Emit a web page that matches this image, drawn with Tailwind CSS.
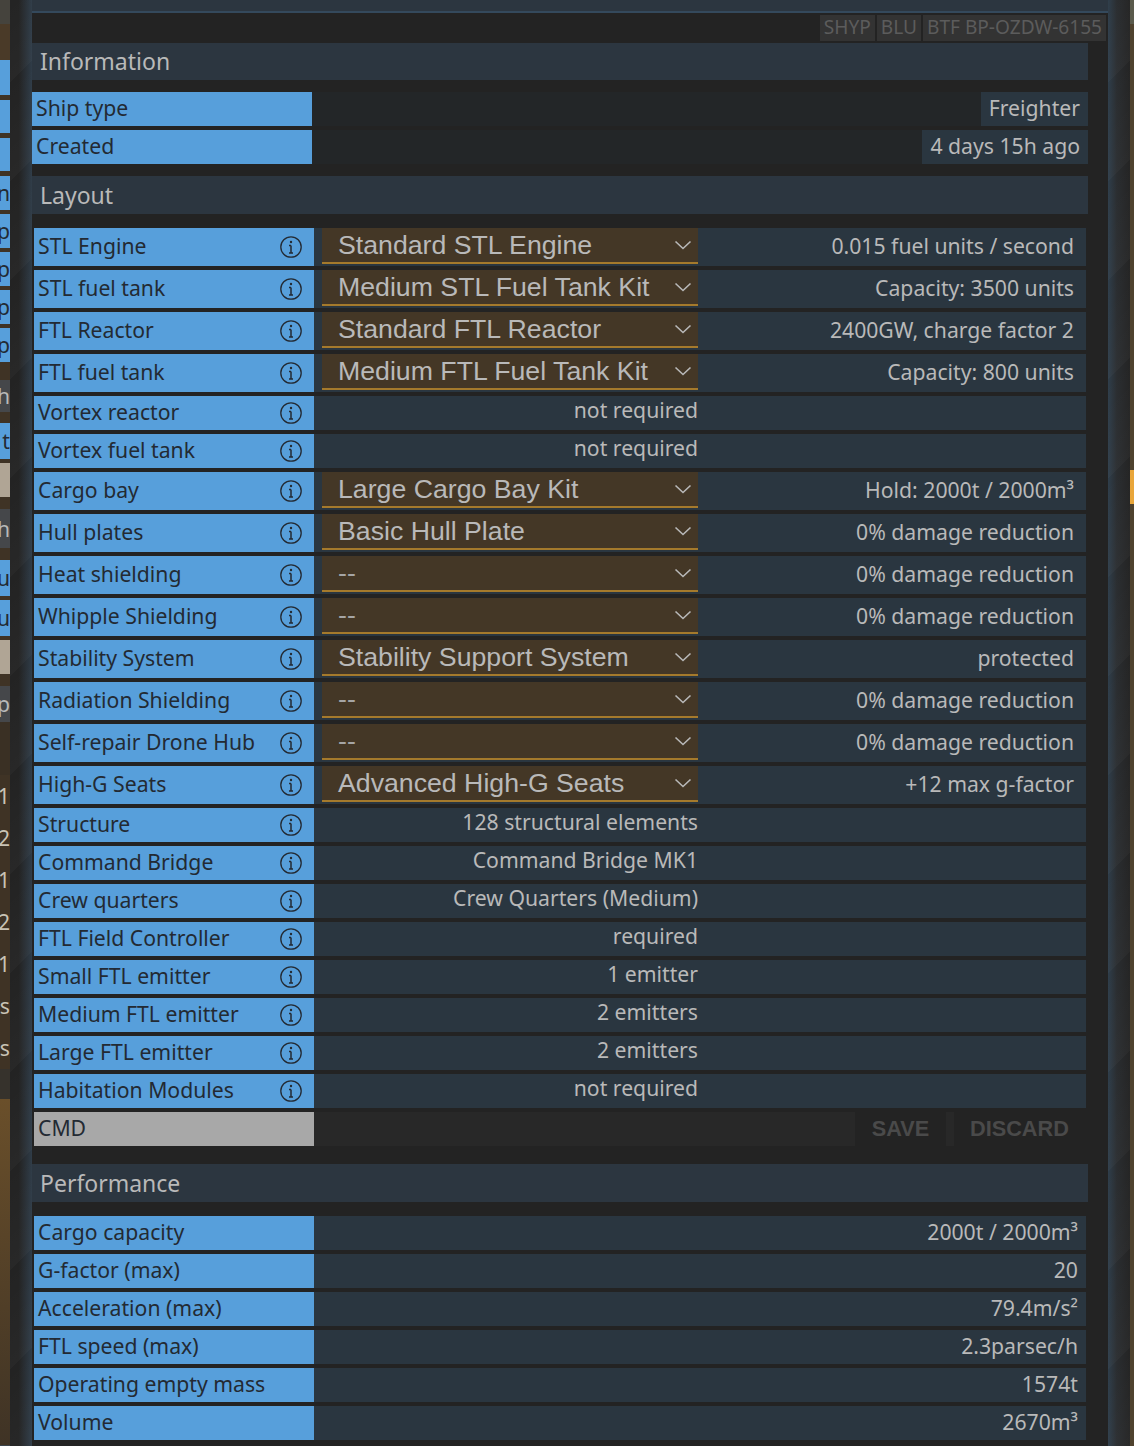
<!DOCTYPE html>
<html lang="en">
<head>
<meta charset="UTF-8">
<title>Ship blueprint</title>
<script src="https://cdn.jsdelivr.net/npm/@tailwindcss/browser@4"></script>
</head>
<body class="bg-[#232323]">
<div class="flex w-[1134px] h-[1446px] overflow-hidden font-['Noto_Sans',sans-serif] text-[21.2px] leading-none text-[#b9b9b9]">

  <!-- left edge of the window behind -->
  <div id="left-edge" class="w-[10px] shrink-0 flex flex-col overflow-hidden bg-[#3f3325]"></div>
  <div class="w-[22px] shrink-0 bg-[repeating-linear-gradient(-45deg,#ffffff06_0,transparent_70px),linear-gradient(to_right,#232323_40%,#2f3c48)]"></div>

  <!-- panel -->
  <div class="w-[1076px] shrink-0 flex flex-col">
    <div class="h-[11px] bg-[#2c3640]"></div>
    <div class="h-[2px] bg-[#34495c]"></div>

    <div class="h-[30px] flex justify-end items-start gap-[2px] pt-[2px] pr-[2px] text-[19.1px] text-[#5c5c5c]">
      <span class="h-[26px] px-[4px] flex items-center bg-[#333333]">SHYP</span>
      <span class="h-[26px] px-[4px] flex items-center bg-[#333333]">BLU</span>
      <span class="h-[26px] px-[4px] flex items-center bg-[#333333]">BTF BP-OZDW-6155</span>
    </div>

    <div class="w-[1056px]">
      <h2 class="h-[37px] pl-[8px] flex items-center bg-[#2c3640] text-[23px] font-normal">Information</h2>

      <div class="mt-[12px] flex flex-col gap-[4px]">
        <div class="flex h-[34px] bg-[#232628]">
          <div class="w-[280px] pl-[4px] pb-[2px] flex items-center bg-[#579fdb] text-[#232a33]">Ship type</div>
          <div class="flex-1 flex justify-end"><span class="px-[8px] pb-[2px] flex items-center bg-[#2a3640]">Freighter</span></div>
        </div>
        <div class="flex h-[34px] bg-[#232628]">
          <div class="w-[280px] pl-[4px] pb-[2px] flex items-center bg-[#579fdb] text-[#232a33]">Created</div>
          <div class="flex-1 flex justify-end"><span class="px-[8px] pb-[2px] flex items-center bg-[#2a3640]">4 days 15h ago</span></div>
        </div>
      </div>

      <h2 class="mt-[12px] h-[38px] pl-[8px] flex items-center bg-[#2c3640] text-[23px] font-normal">Layout</h2>

      <div id="layout-rows" class="mt-[14px] ml-[2px] w-[1052px] flex flex-col gap-[4px]"></div>

      <h2 class="mt-[18px] h-[38px] pl-[8px] flex items-center bg-[#2c3640] text-[23px] font-normal">Performance</h2>

      <div id="perf-rows" class="mt-[14px] ml-[2px] w-[1052px] flex flex-col gap-[4px]"></div>
    </div>
  </div>

  <!-- right edge -->
  <div class="w-[22px] shrink-0 bg-[repeating-linear-gradient(-45deg,#ffffff06_0,transparent_70px),linear-gradient(to_right,#2f3e4b,#2a2d30_40%,#242424)]"></div>
  <div class="w-[4px] shrink-0 flex flex-col bg-[#4f422e]">
    <div class="h-[24px] shrink-0 bg-[#5a5a4c]"></div>
    <div class="h-[446px] shrink-0"></div>
    <div class="h-[34px] shrink-0 bg-[#e9a63a]"></div>
  </div>
</div>

<script>
  const infoIcon = `<svg class="absolute right-[12px] top-1/2 -translate-y-1/2" width="22" height="22" viewBox="0 0 22 22" fill="none" stroke="#232a33"><circle cx="11" cy="11" r="10.2" stroke-width="1.3"/><path d="M11 9.5V17M9 9.5h2M9 17h4" stroke-width="1.5"/><circle cx="11" cy="6" r="1.2" fill="#232a33" stroke="none"/></svg>`;
  const chevron = `<svg width="18" height="10" viewBox="0 0 18 10" fill="none" stroke="#b9b9b9" stroke-width="1.6"><path d="M1.5 1.5 9 8.5 16.5 1.5"/></svg>`;

  function label(text, icon, pad) {
    return `<div class="relative w-[280px] shrink-0 pl-[4px] ${pad} flex items-center bg-[#579fdb] text-[#232a33]">${text}${icon ? infoIcon : ''}</div>`;
  }

  const layout = [
    ['STL Engine', 'Standard STL Engine', '0.015 fuel units / second'],
    ['STL fuel tank', 'Medium STL Fuel Tank Kit', 'Capacity: 3500 units'],
    ['FTL Reactor', 'Standard FTL Reactor', '2400GW, charge factor 2'],
    ['FTL fuel tank', 'Medium FTL Fuel Tank Kit', 'Capacity: 800 units'],
    ['Vortex reactor', null, 'not required'],
    ['Vortex fuel tank', null, 'not required'],
    ['Cargo bay', 'Large Cargo Bay Kit', 'Hold: 2000t / 2000m³'],
    ['Hull plates', 'Basic Hull Plate', '0% damage reduction'],
    ['Heat shielding', '--', '0% damage reduction'],
    ['Whipple Shielding', '--', '0% damage reduction'],
    ['Stability System', 'Stability Support System', 'protected'],
    ['Radiation Shielding', '--', '0% damage reduction'],
    ['Self-repair Drone Hub', '--', '0% damage reduction'],
    ['High-G Seats', 'Advanced High-G Seats', '+12 max g-factor'],
    ['Structure', null, '128 structural elements'],
    ['Command Bridge', null, 'Command Bridge MK1'],
    ['Crew quarters', null, 'Crew Quarters (Medium)'],
    ['FTL Field Controller', null, 'required'],
    ['Small FTL emitter', null, '1 emitter'],
    ['Medium FTL emitter', null, '2 emitters'],
    ['Large FTL emitter', null, '2 emitters'],
    ['Habitation Modules', null, 'not required'],
  ];

  let html = '';
  layout.forEach(([name, part, value]) => {
    if (part) {
      html += `<div class="flex h-[38px] bg-[#2a3640]">${label(name, true, 'pb-[3px]')}
        <div class="ml-[8px] mb-[2px] w-[376px] shrink-0 flex items-center justify-between pl-[16px] pr-[6px] bg-[#443726] border-b-2 border-[#a57a2c] font-['Liberation_Sans',sans-serif] text-[26.7px] ${part === '--' ? 'text-[#a5a5a5]' : ''}"><span>${part}</span>${chevron}</div>
        <div class="flex-1 flex items-center justify-end pr-[12px] pb-[2px]">${value}</div></div>`;
    } else {
      html += `<div class="flex h-[34px] bg-[#2a3640]">${label(name, true, 'pb-[2px]')}
        <div class="w-[384px] shrink-0 flex items-center justify-end pb-[6px]">${value}</div></div>`;
    }
  });
  html += `<div class="flex h-[34px]">
    <div class="w-[280px] shrink-0 pl-[4px] pb-[2px] flex items-center bg-[#a8a8a8] text-[#232a33]">CMD</div>
    <div class="w-[541px] shrink-0 bg-[#282828]"></div>
    <div class="w-[91px] shrink-0 flex items-center justify-center font-['Liberation_Sans',sans-serif] font-bold text-[21.7px] text-[#4a4a4a]">SAVE</div>
    <div class="w-[8px] shrink-0 bg-[#282828]"></div>
    <div class="flex-1 flex items-center pl-[16px] font-['Liberation_Sans',sans-serif] font-bold text-[21.7px] text-[#4a4a4a]">DISCARD</div>
  </div>`;
  document.getElementById('layout-rows').innerHTML = html;

  const perf = [
    ['Cargo capacity', '2000t / 2000m³'],
    ['G-factor (max)', '20'],
    ['Acceleration (max)', '79.4m/s²'],
    ['FTL speed (max)', '2.3parsec/h'],
    ['Operating empty mass', '1574t'],
    ['Volume', '2670m³'],
  ];
  document.getElementById('perf-rows').innerHTML = perf.map(([name, value]) =>
    `<div class="flex h-[34px] bg-[#2a3640]">${label(name, false, 'pb-[2px]')}<div class="flex-1 flex items-center justify-end pr-[8px] pb-[2px]">${value}</div></div>`
  ).join('');

  // strip of the neighbouring panel, clipped by this window: [height, colour class, clipped text]
  const blue = 'bg-[#579fdb] text-[#232a33]', tan = 'bg-[#b0a595]', grey = 'bg-[#45474a] text-[#b9b9b9]', brown = 'bg-[#3f3325]', pale = 'text-[#c9c3b5]';
  const edge = [
    [24, 'bg-[#45433d]', ''], [36, 'bg-[#4a3a28]', ''],
    [35, blue, ''], [5, brown, ''], [33, blue, ''], [5, brown, ''], [33, blue, ''], [5, brown, ''],
    [34, blue, 'n'], [4, brown, ''], [34, blue, 'p'], [4, brown, ''], [34, blue, 'p'], [4, brown, ''], [34, blue, 'p'], [4, brown, ''], [34, blue, 'p'],
    [18, brown, ''], [32, grey, 'h'], [11, brown, ''], [36, blue, 't'], [4, brown, ''], [34, tan, ''], [12, brown, ''],
    [39, grey, 'h'], [12, brown, ''], [36, blue, 'u'], [4, brown, ''], [36, blue, 'u'], [4, brown, ''], [34, tan, ''], [12, brown, ''],
    [36, grey, 'p'], [53, 'bg-[#3a3024]', ''],
    [42, pale, '21'], [42, pale, '2'], [42, pale, '1'], [42, pale, '2'], [42, pale, '1'], [42, pale, 's'], [42, pale, 's'],
    [30, 'bg-[#36322c]', ''], [346, 'bg-[linear-gradient(#6a4f2a,#3f3325)]', ''], [20, 'bg-[#3c444b]', ''],
  ];
  document.getElementById('left-edge').innerHTML = edge.map(([h, cls, text]) =>
    `<div class="shrink-0 flex items-center justify-end whitespace-nowrap ${cls}" style="height:${h}px">${text}</div>`
  ).join('');
</script>
</body>
</html>
